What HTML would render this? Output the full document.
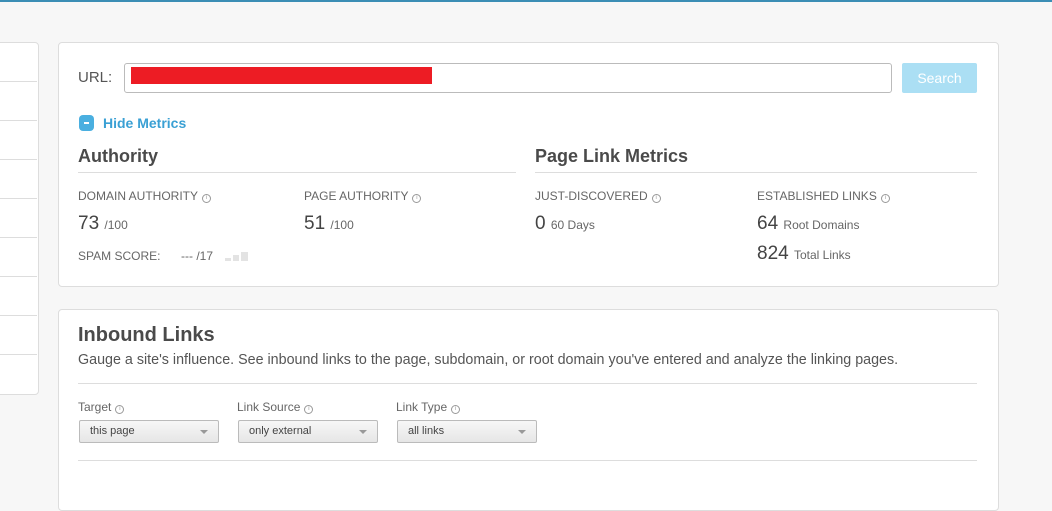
<!DOCTYPE html>
<html><head><style>
body{margin:0;width:1052px;height:492px;overflow:hidden;background:#f7f7f7;font-family:"Liberation Sans",Arial,sans-serif;color:#555;position:relative}
.a{position:absolute}
.card{position:absolute;background:#fff;border:1px solid #ddd;border-radius:4px}
.lbl{position:absolute;font-size:12px;color:#666;white-space:nowrap}
.i{display:inline-block;width:7px;height:7px;border:1px solid #999;border-radius:50%;font-size:6px;line-height:7px;text-align:center;color:#999;margin-left:4px;vertical-align:1px}
.num{position:absolute;font-size:19px;color:#444;white-space:nowrap}
.num small{font-size:12px;color:#666}
.h{position:absolute;font-weight:bold;color:#4a4a4a;white-space:nowrap}
.line{position:absolute;height:1px;background:#ddd}
.sel{position:absolute;top:420px;width:138px;height:21px;border:1px solid #bbb;border-radius:2px;background:linear-gradient(#f7f7f7,#e6e6e6);font-size:11px;color:#444;line-height:21px;text-indent:10px}
.sel:after{content:"";position:absolute;right:10px;top:9px;border:4px solid transparent;border-top:4px solid #999;border-bottom:0}
</style></head><body>
<div class="a" style="left:0;top:0;width:1052px;height:2px;background:#3b8eb5"></div>
<div class="card" style="left:-5px;top:42px;width:42px;height:351px"></div>
<div class="line" style="left:0;top:81px;width:37px"></div>
<div class="line" style="left:0;top:120px;width:37px"></div>
<div class="line" style="left:0;top:159px;width:37px"></div>
<div class="line" style="left:0;top:198px;width:37px"></div>
<div class="line" style="left:0;top:237px;width:37px"></div>
<div class="line" style="left:0;top:276px;width:37px"></div>
<div class="line" style="left:0;top:315px;width:37px"></div>
<div class="line" style="left:0;top:354px;width:37px"></div>

<div class="card" style="left:58px;top:42px;width:939px;height:243px"></div>
<div class="a" style="left:78px;top:69px;font-size:15px;color:#555">URL:</div>
<div class="a" style="left:124px;top:63px;width:766px;height:28px;border:1px solid #bbb;border-radius:3px;background:#fff"></div>
<div class="a" style="left:131px;top:67px;width:301px;height:17px;background:#ed1c24"></div>
<div class="a" style="left:902px;top:63px;width:75px;height:30px;background:#abdff4;border-radius:2px;color:#fff;font-size:14px;text-align:center;line-height:30px">Search</div>
<div class="a" style="left:79px;top:115px;width:15px;height:16px;background:#4aafe0;border-radius:4px"><div class="a" style="left:5px;top:7px;width:5px;height:2px;background:#fff"></div></div>
<div class="a" style="left:103px;top:115px;font-size:14px;font-weight:bold;color:#3aa0d4">Hide Metrics</div>
<div class="h" style="left:78px;top:146px;font-size:18px">Authority</div>
<div class="line" style="left:78px;top:172px;width:438px"></div>
<div class="h" style="left:535px;top:146px;font-size:18px">Page Link Metrics</div>
<div class="line" style="left:535px;top:172px;width:442px"></div>
<div class="lbl" style="left:78px;top:189px">DOMAIN AUTHORITY<span class="i">i</span></div>
<div class="lbl" style="left:304px;top:189px">PAGE AUTHORITY<span class="i">i</span></div>
<div class="lbl" style="left:535px;top:189px">JUST-DISCOVERED<span class="i">i</span></div>
<div class="lbl" style="left:757px;top:189px">ESTABLISHED LINKS<span class="i">i</span></div>
<div class="num" style="left:78px;top:213px">73 <small>/100</small></div>
<div class="num" style="left:304px;top:213px">51 <small>/100</small></div>
<div class="num" style="left:535px;top:213px">0 <small>60 Days</small></div>
<div class="num" style="left:757px;top:213px">64 <small>Root Domains</small></div>
<div class="num" style="left:757px;top:243px">824 <small>Total Links</small></div>
<div class="lbl" style="left:78px;top:249px">SPAM SCORE:</div>
<div class="lbl" style="left:181px;top:249px">--- /17</div>
<div class="a" style="left:225px;top:258px;width:6px;height:3px;background:#e3e3e3"></div>
<div class="a" style="left:233px;top:255px;width:6px;height:6px;background:#e3e3e3"></div>
<div class="a" style="left:241px;top:252px;width:7px;height:9px;background:#e3e3e3"></div>

<div class="card" style="left:58px;top:309px;width:939px;height:200px"></div>
<div class="h" style="left:78px;top:324px;font-size:20px">Inbound Links</div>
<div class="a" style="left:78px;top:352px;font-size:14.3px;color:#555;white-space:nowrap">Gauge a site's influence. See inbound links to the page, subdomain, or root domain you've entered and analyze the linking pages.</div>
<div class="line" style="left:78px;top:383px;width:899px"></div>
<div class="lbl" style="left:78px;top:400px">Target<span class="i">i</span></div>
<div class="lbl" style="left:237px;top:400px">Link Source<span class="i">i</span></div>
<div class="lbl" style="left:396px;top:400px">Link Type<span class="i">i</span></div>
<div class="sel" style="left:79px">this page</div>
<div class="sel" style="left:238px">only external</div>
<div class="sel" style="left:397px">all links</div>
<div class="line" style="left:78px;top:460px;width:899px"></div>
</body></html>
